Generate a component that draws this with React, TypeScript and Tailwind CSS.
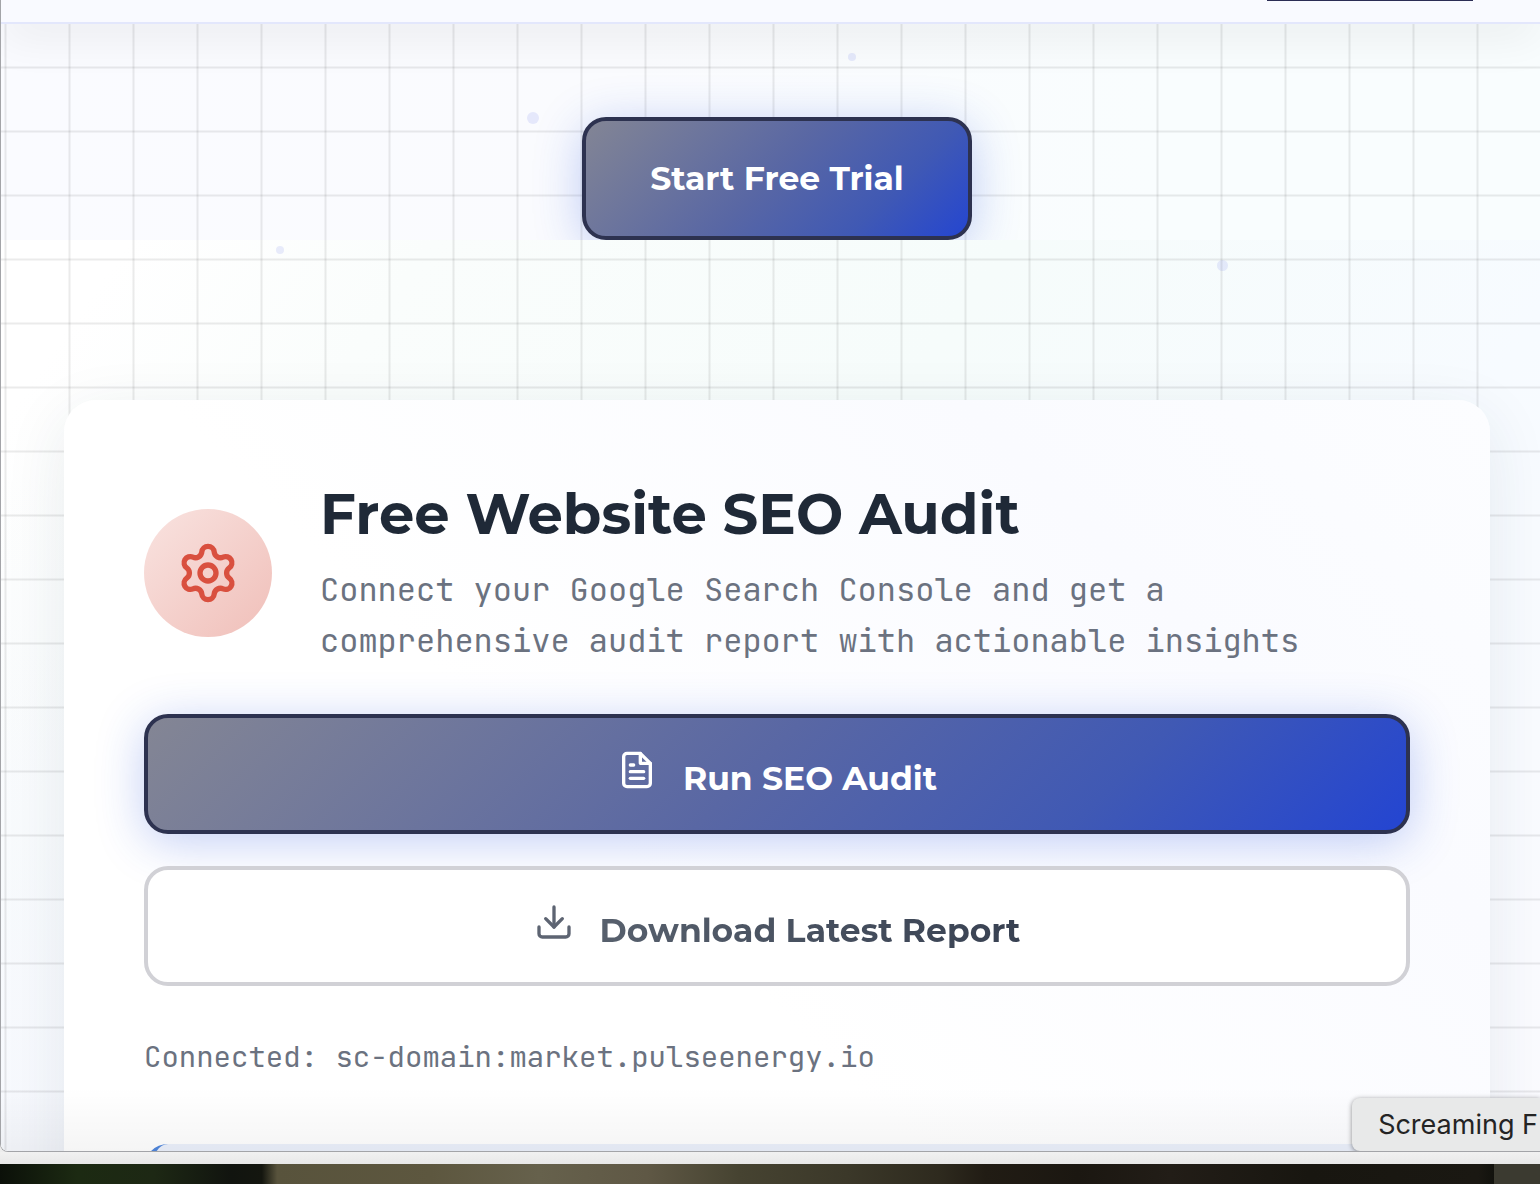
import type { ReactNode } from "react";
import { FiDownload, FiFileText } from "react-icons/fi";
import { Settings } from "lucide-react";

const heading = "font-['Montserrat','Inter',sans-serif]";
const mono = "font-['JetBrains_Mono','DejaVu_Sans_Mono',monospace]";

const primaryButton =
  "border-4 border-[#2d3250] bg-[linear-gradient(135deg,#848694_0%,#5967a4_48%,#4059b4_75%,#2546d0_98%)] bg-origin-border text-white shadow-[0_8px_48px_rgba(37,80,220,0.28)]";

const specks = [
  "left-[847px] top-[29px] size-2",
  "left-[526px] top-[88px] size-3",
  "left-[275px] top-[222px] size-2",
  "left-[1216px] top-[236px] size-[11px]",
];

function ActionButton({
  icon,
  className,
  children,
}: {
  icon: ReactNode;
  className: string;
  children: ReactNode;
}) {
  return (
    <button
      type="button"
      className={`flex h-[120px] w-full items-center justify-center rounded-3xl ${className}`}
    >
      <span className={`flex items-baseline gap-[26px] text-[33px] font-bold leading-10 ${heading}`}>
        {icon}
        {children}
      </span>
    </button>
  );
}

function SiteHeader() {
  return (
    <header className="relative z-10 flex h-6 shrink-0 items-start justify-end border-b-2 border-[#e3e7fc] bg-[#f9faff] pr-[67px] shadow-[0_8px_48px_rgba(0,0,0,0.1)]">
      <span className="h-px w-[206px] bg-[#2b2d55]" />
    </header>
  );
}

function AuditCard() {
  return (
    <section className="relative mt-40 rounded-[32px] bg-[linear-gradient(225deg,#fcfdff_0%,#fafbff_22%,#ffffff_55%)] p-20 shadow-[0_16px_64px_rgba(30,50,80,0.09)]">
      <div className="flex items-center gap-12">
        <div className="flex size-32 shrink-0 items-center justify-center rounded-full bg-[linear-gradient(135deg,#f9e3e0,#f0bfb9)]">
          <Settings className="size-16 text-[#d9503f]" strokeWidth={2} />
        </div>
        <div>
          <h2 className={`mb-4 text-[56px] font-bold leading-[68px] text-[#1f2937] ${heading}`}>
            Free Website SEO Audit
          </h2>
          <p className={`text-[32px] leading-[51px] text-[#6b7280] ${mono}`}>
            Connect your Google Search Console and get a comprehensive audit report with actionable
            insights
          </p>
        </div>
      </div>

      <div className="mt-12 flex flex-col gap-8">
        <ActionButton icon={<FiFileText className="size-10" />} className={primaryButton}>
          Run SEO Audit
        </ActionButton>
        <ActionButton
          icon={<FiDownload className="size-10 text-[#5d6472]" />}
          className="relative border-4 border-[#d1d1d6] bg-white"
        >
          <span className="bg-[linear-gradient(90deg,#57606d,#384152)] bg-clip-text text-transparent">
            Download Latest Report
          </span>
        </ActionButton>
      </div>

      <p className={`mt-12 text-[29px] leading-[46px] text-[#6b7280] ${mono}`}>
        Connected: sc-domain:market.pulseenergy.io
      </p>

      <div className="mt-16 h-40 rounded-3xl border-l-8 border-[#4f86dc] bg-[#ebf0fb]" />
    </section>
  );
}

export default function App() {
  return (
    <div className="flex h-screen flex-col overflow-hidden bg-[#ededed]">
      <div className="relative flex min-h-0 flex-1 flex-col overflow-hidden rounded-bl-lg border-b border-l border-[#a3a4a8] bg-white">
        <SiteHeader />

        <main className="relative min-h-0 flex-1 bg-[linear-gradient(125deg,#ffffff_0%,#ffffff_12%,#fafdfc_25%,#f6fcfb_50%,#f7fbff_75%,#fbfbff_100%)]">
          <div className="absolute inset-x-0 top-0 h-[216px] bg-[linear-gradient(90deg,#fafbff,#fafbfe_40%,#f9fdfe_75%)]" />
          <div className="absolute inset-y-0 left-0 w-16 bg-[linear-gradient(180deg,transparent_40%,#f7f9fe)]" />
          <div className="absolute inset-0 bg-[linear-gradient(90deg,#0000000a_1px,#00000014_1px,#00000014_2px,#0000000a_2px,#0000000a_3px,transparent_3px),linear-gradient(180deg,#0000000a_1px,#00000014_1px,#00000014_2px,#0000000a_2px,#0000000a_3px,transparent_3px)] bg-[length:64px_64px] bg-[position:3px_42px]" />
          {specks.map((speck) => (
            <span key={speck} className={`absolute rounded-full bg-[#4f63e6]/12 ${speck}`} />
          ))}

          <div className="relative pl-[63px] pr-[50px]">
            {/* The hero clips the glow of its button at the bottom edge. */}
            <section className="-mx-12 flex justify-center overflow-hidden pt-[93px]">
              <button
                type="button"
                className={`rounded-3xl px-16 py-8 text-[33px] font-bold leading-[51px] ${heading} ${primaryButton}`}
              >
                Start Free Trial
              </button>
            </section>

            <AuditCard />
          </div>
        </main>

        <div className="pointer-events-none absolute inset-x-0 bottom-0 h-16 bg-[linear-gradient(180deg,transparent,rgba(0,0,0,0.04))]" />
        <div
          role="tooltip"
          className="absolute bottom-0 right-0 rounded-l-lg bg-[#e8e9e9] py-1 pl-[26px] pr-0.5 font-['Inter',sans-serif] text-[27px] leading-[45px] text-[#242424] shadow-[0_1px_5px_rgba(0,0,0,0.45)]"
        >
          Screaming F
        </div>
      </div>

      <div className="h-3 shrink-0 bg-[linear-gradient(180deg,#f1f1f1,#e8e8e8)]" />
      {/* Desktop wallpaper below the window */}
      <div className="h-5 shrink-0 bg-[linear-gradient(90deg,#0b1009_0%,#1c2a12_5%,#1d2814_10%,#11140f_15%,#14160f_17%,#58533c_18%,#5d573f_28%,#66614c_35%,#5f5845_42%,#464331_48%,#3b3829_55%,#2e2a1e_61%,#211c14_64%,#1b1711_70%,#221d17_76%,#181610_85%,#1a1812_96%,#12120d_97%,#3b3a30_97%,#3b3a30_100%)]" />
    </div>
  );
}
